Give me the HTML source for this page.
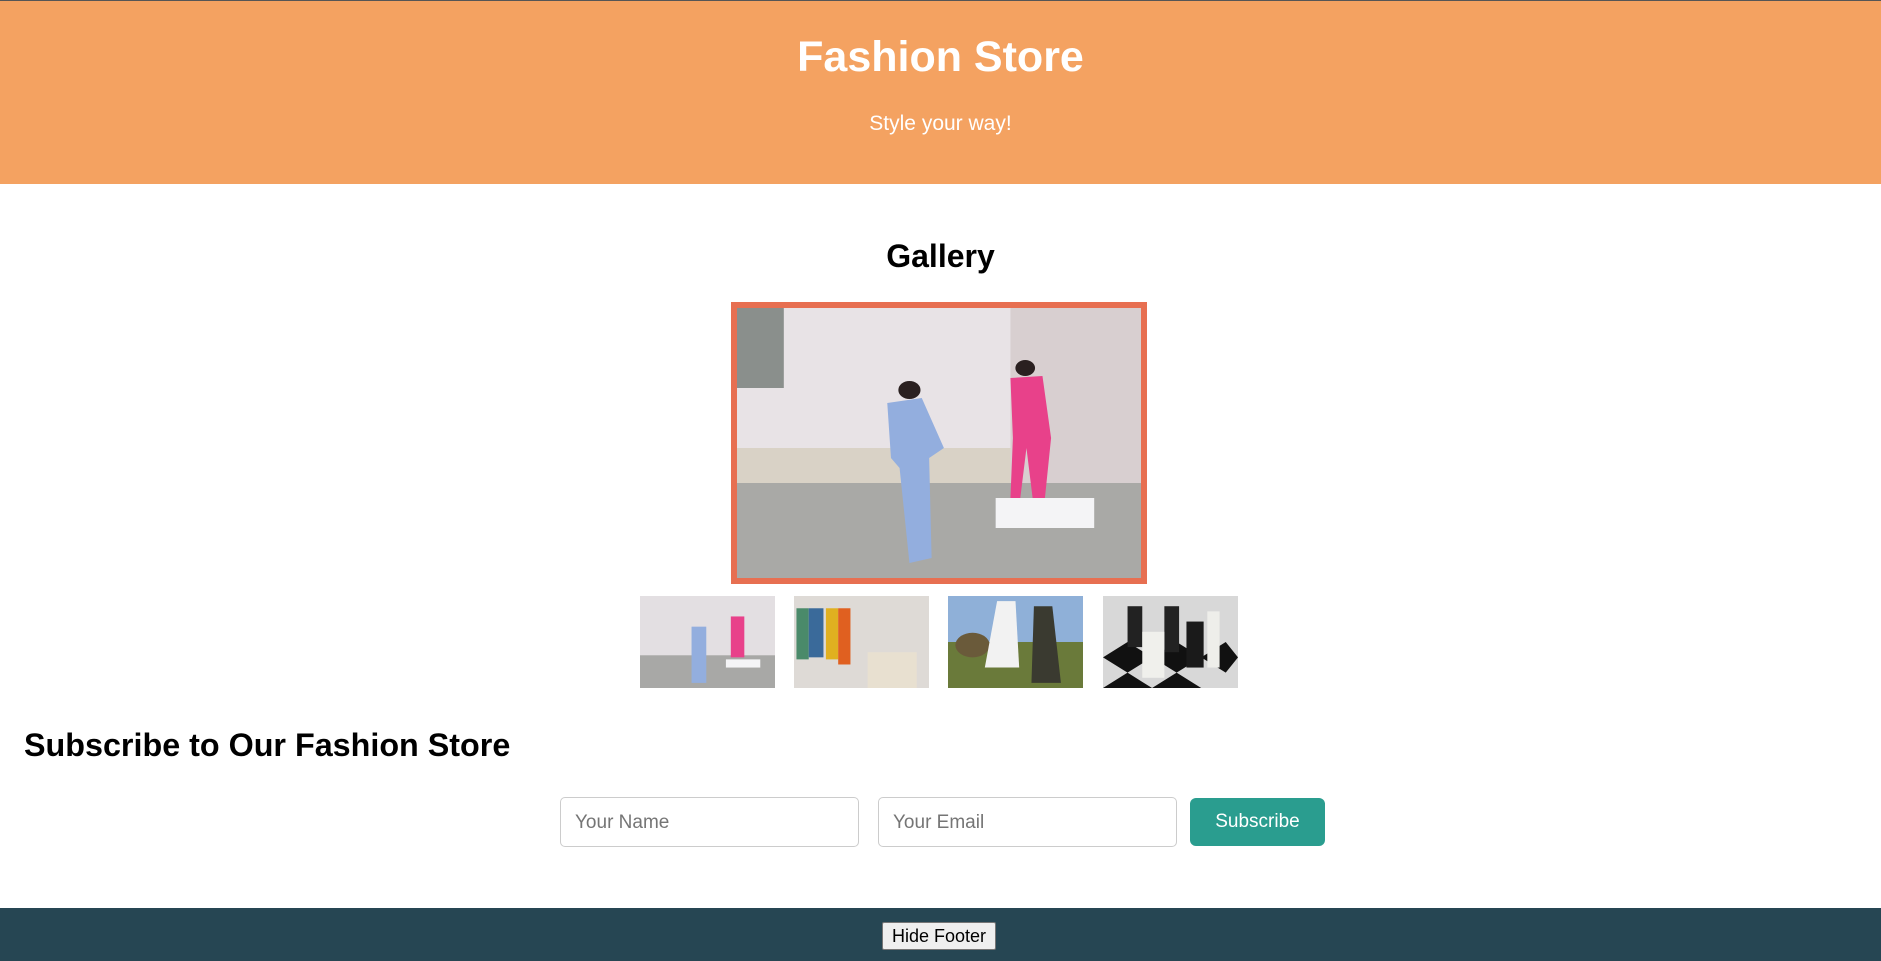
<!DOCTYPE html>
<html><head><meta charset="utf-8"><style>
*{box-sizing:border-box;margin:0;padding:0}
body{width:1881px;height:961px;overflow:hidden;font-family:"Liberation Sans",Arial,sans-serif;background:#fff;position:relative}
header{position:absolute;left:0;top:0;width:1881px;height:184px;background:#F4A261;color:#fff;text-align:center;border-top:1px solid #555}
header h1{position:absolute;top:32px;width:100%;font-size:43px;font-weight:bold}
header p{position:absolute;top:111px;width:100%;font-size:21px}
.g{position:absolute;top:238px;width:100%;text-align:center;font-size:32px;font-weight:bold}
.main{position:absolute;left:731px;top:302px;width:416px;height:282px;border:6px solid #E76F51;overflow:hidden}
.t{position:absolute;top:596px;width:135px;height:92px;overflow:hidden}
h2{position:absolute;left:24px;top:727px;font-size:32.3px;font-weight:bold}
.in{position:absolute;top:797px;width:299px;height:50px;border:1px solid #ccc;border-radius:5px;font-size:19px;color:#757575;padding:14px 0 0 14px}
.btn{position:absolute;left:1190px;top:798px;width:135px;height:48px;background:#2A9D8F;border-radius:6px;color:#fff;font-size:19px;text-align:center;line-height:48px}
footer{position:absolute;left:0;top:908px;width:1881px;height:53px;background:#264653}
.hf{position:absolute;left:882px;top:922px;width:114px;height:28px;background:#efefef;border:1px solid #767676;border-radius:2px;font-size:18px;text-align:center;line-height:26px;color:#000}
</style></head><body>
<header><h1>Fashion Store</h1><p>Style your way!</p></header>
<div class="g">Gallery</div>
<div class="main"><svg width="404" height="270" viewBox="0 0 328 270" preserveAspectRatio="none">
<rect width="328" height="270" fill="#ddd9dc"/><rect width="328" height="150" fill="#e8e3e6"/>
<rect x="0" y="0" width="38" height="80" fill="#8a8f8c"/><rect x="222" y="0" width="106" height="190" fill="#d8cfd0"/>
<rect x="0" y="140" width="222" height="40" fill="#d9d2c6"/>
<rect x="0" y="175" width="328" height="95" fill="#a9a9a6"/>
<rect x="210" y="190" width="80" height="30" fill="#f4f4f6"/>
<path d="M122 95 L150 90 L168 140 L156 150 L158 250 L140 255 L132 160 L125 150Z" fill="#93aede"/>
<circle cx="140" cy="82" r="9" fill="#2a2020"/>
<path d="M222 70 L248 68 L255 130 L250 190 L240 190 L235 140 L230 190 L222 190 L224 130Z" fill="#e8418a"/>
<circle cx="234" cy="60" r="8" fill="#2a2020"/>
</svg></div>
<div class="t" style="left:640px"><svg width="135" height="92" viewBox="0 0 110 90" preserveAspectRatio="none"><rect width="110" height="90" fill="#e3dfe2"/><rect y="58" width="110" height="32" fill="#a8a8a6"/><rect x="42" y="30" width="12" height="55" fill="#93aede"/><rect x="74" y="20" width="11" height="40" fill="#e8418a"/><rect x="70" y="62" width="28" height="8" fill="#f4f4f6"/></svg></div>
<div class="t" style="left:794px"><svg width="135" height="92" viewBox="0 0 110 90" preserveAspectRatio="none"><rect width="110" height="90" fill="#dedad6"/><rect x="2" y="12" width="10" height="50" fill="#4a8a6a"/><rect x="12" y="12" width="12" height="48" fill="#3a6a9a"/><rect x="26" y="12" width="10" height="50" fill="#e0b020"/><rect x="36" y="12" width="10" height="55" fill="#e06020"/><rect x="60" y="55" width="40" height="35" fill="#e8e0d0"/></svg></div>
<div class="t" style="left:948px"><svg width="135" height="92" viewBox="0 0 110 90" preserveAspectRatio="none"><rect width="110" height="90" fill="#8fb0d8"/><rect y="45" width="110" height="45" fill="#6a7a3a"/><ellipse cx="20" cy="48" rx="14" ry="12" fill="#6a5a3a"/><path d="M40 5 L55 5 L58 70 L30 70Z" fill="#f2f2f2"/><path d="M70 10 L85 10 L92 85 L68 85Z" fill="#3a3a30"/></svg></div>
<div class="t" style="left:1103px"><svg width="135" height="92" viewBox="0 0 110 90" preserveAspectRatio="none"><rect width="110" height="90" fill="#d8d8d8"/><path d="M0 60 L20 45 L40 60 L20 75Z M40 60 L60 45 L80 60 L60 75Z M20 75 L40 90 L0 90Z M60 75 L80 90 L40 90Z M80 60 L100 45 L110 60 L100 75Z" fill="#111"/><rect x="20" y="10" width="12" height="40" fill="#222"/><rect x="50" y="10" width="12" height="45" fill="#222"/><rect x="32" y="35" width="18" height="45" fill="#f0f0ec"/><rect x="68" y="25" width="14" height="45" fill="#1a1a1a"/><rect x="85" y="15" width="10" height="55" fill="#eeeeea"/></svg></div>
<h2>Subscribe to Our Fashion Store</h2>
<div class="in" style="left:560px">Your Name</div>
<div class="in" style="left:878px">Your Email</div>
<div class="btn">Subscribe</div>
<footer></footer>
<div class="hf">Hide Footer</div>
</body></html>
